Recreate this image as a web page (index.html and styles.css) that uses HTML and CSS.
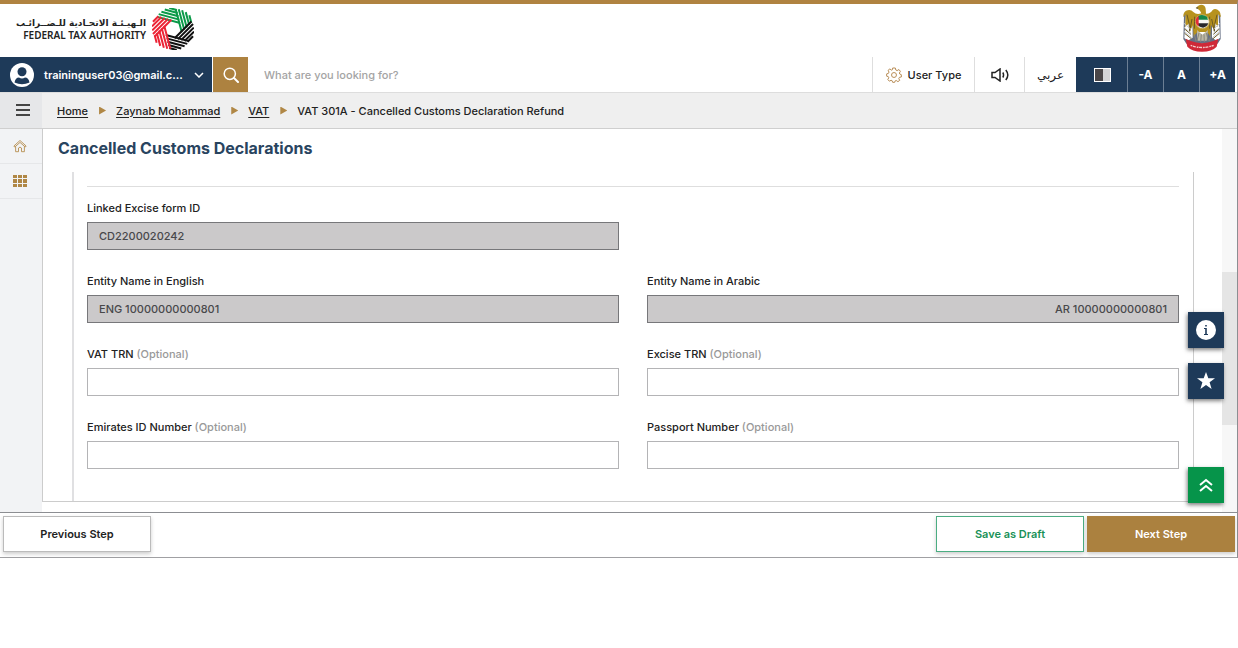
FILE: index.html
```html
<!DOCTYPE html>
<html lang="en">
<head>
<meta charset="utf-8">
<title>Cancelled Customs Declarations</title>
<link rel="stylesheet" href="styles.css">
</head>
<body>
<div class="app">
  <header class="brand">
    <div class="logo">
      <div class="logo-text">
        <span class="logo-ar" lang="ar" dir="rtl">الـهيـئـة الاتحـادية للـضــرائـب</span>
        <span class="logo-en">FEDERAL TAX AUTHORITY</span>
      </div>
      <svg class="logo-mark" viewBox="-63 -63 126 126" aria-hidden="true">
        <defs>
          <path id="blade" d="M-55-23H16M-53-32H11M-47-41H6M-39-50H1M-27-58H-4" fill="none" stroke-width="6"/>
        </defs>
        <g transform="rotate(15)">
          <g stroke="#0a9a48"><use href="#blade"/><use href="#blade" transform="rotate(60)"/></g>
          <g stroke="#111"><use href="#blade" transform="rotate(120)"/><use href="#blade" transform="rotate(180)"/></g>
          <g stroke="#ec2436"><use href="#blade" transform="rotate(240)"/><use href="#blade" transform="rotate(300)"/></g>
        </g>
      </svg>
    </div>
    <svg class="emblem" viewBox="0 0 114 144" aria-hidden="true">
      <path d="M3 34L9 27L4 102L14 110L29 101L28 45L42 48L44 102L71 102L72 48L87 44L87 101L101 110L111 101L106 28L112 34L113 105L104 119L10 119L1 105Z" fill="#667084"/>
      <path d="M55 28C52 20 49 18 44 14L38 12L46 5C56-1 67 4 68 14L69 29Q80 31 89 18Q98 11 109 22Q114 28 113 40L105 30L105 69L96 57L95 82L84 62L82 98L73 84L43 84L32 98L30 63L20 83L18 58L7 69L8 31L1 40Q0 25 9 20Q23 14 31 24Q41 34 55 28Z" fill="#b7921e"/>
      <path d="M12 32L18 57L20 82L27 45M102 32L96 57L94 82L86 45M5 75L24 91M5 88L25 104M109 75L91 91M109 88L90 104M35 38L34 74M80 38L80 74" fill="none" stroke="#6b5923" stroke-width="3"/>
      <path d="M3 58L24 76M3 70L24 88M4 82L26 101M111 58L91 76M111 70L91 88M110 82L88 101" fill="none" stroke="#c3c7ce" stroke-width="3"/>
      <circle cx="58" cy="53" r="21" fill="#f6f6f2" stroke="#c3a849" stroke-width="3"/>
      <path d="M45 37Q57 29 72 38L75 47H45Z" fill="#16874a"/>
      <path d="M45 58H76Q72 69 60 71Q49 70 45 64Z" fill="#28282a"/>
      <path d="M38 47Q40 39 47 36V68Q38 63 38 52Z" fill="#e32b38"/>
      <path d="M42 78L58 92L75 78L71 110H44Z" fill="#bdb9a6"/>
      <path d="M48 87L42 111M55 91L53 114M63 91L64 114M70 87L76 111M34 91L39 112M84 91L79 112" stroke="#8a877c" stroke-width="3"/>
      <path d="M8 104L23 111Q57 124 91 111L106 104L101 128Q87 143 57 143Q27 143 13 128Z" fill="#cf2937"/>
      <path d="M23 124Q57 137 92 124" fill="none" stroke="#f4d0cd" stroke-width="4" stroke-dasharray="5 2 9 3"/>
      <path d="M38 12L46 9L44 15Z" fill="#555"/>
    </svg>
  </header>

  <div class="toolbar">
    <button class="user" type="button">
      <svg class="avatar" viewBox="0 0 24 24" aria-hidden="true"><circle cx="12" cy="12" r="12" fill="#fff"/><circle cx="12" cy="8.800" r="4.500" fill="#1e3a59"/><path d="M4.500 19.500Q5.500 14.500 9 14.500Q12 16.500 15 14.500Q18.500 14.500 19.500 19.500Q12 23 4.500 19.500Z" fill="#1e3a59"/></svg>
      <span class="user-name">traininguser03@gmail.c...</span>
      <svg class="caret" viewBox="0 0 10 6" aria-hidden="true"><path d="M1 1L5 5L9 1" fill="none" stroke="#fff" stroke-width="1.500"/></svg>
    </button>
    <form class="search">
      <button class="search-btn" type="button" aria-label="Search"><svg viewBox="0 0 16 16" aria-hidden="true"><circle cx="6.800" cy="6.800" r="5.600" fill="none" stroke="#fff" stroke-width="1.500"/><path d="M11 11L15 15" stroke="#fff" stroke-width="2" stroke-linecap="round"/></svg></button>
      <input class="search-input" type="search" aria-label="Search" placeholder="What are you looking for?">
    </form>
    <button class="tool user-type" type="button">
      <svg class="gear" viewBox="0 0 24 24" fill="none" stroke="#b98e58" stroke-width="1.500" stroke-linejoin="round" aria-hidden="true"><circle cx="12" cy="12" r="3.700"/><path d="M10 1.500H14L14.700 4.500L16.700 5.400L19.400 3.800L21.600 6.500L20 9L20.700 10.600L23 11.500V15L20.200 15.500L19.200 17.500L20.600 20L17.900 22L15.300 20.200L13.800 20.800L13 23H10L9.200 20.600L7.600 19.900L5 21.300L2.700 18.700L4.200 16.200L3.500 14.500L1 13.800V10.300L3.700 9.500L4.500 7.600L3.100 5L5.800 2.900L8.200 4.700L9.500 4.200Z"/></svg>
      User Type
    </button>
    <button class="tool speaker" type="button" aria-label="Read aloud"><svg viewBox="0 0 18 14" fill="none" stroke="#222" stroke-width="1.500" aria-hidden="true"><path d="M1 4.500H4L9 1V13L4 9.500H1Z"/><path d="M11.800 4.500Q13.300 7 11.800 9.500M14.800 2Q18.800 7 14.800 12"/></svg></button>
    <button class="tool arabic" type="button" lang="ar">عربي</button>
    <button class="tool dark contrast" type="button" aria-label="Contrast"><svg viewBox="0 0 17 14" aria-hidden="true"><path fill="#fff" d="M0 0H17V14H0Z"/><path fill="#4a4648" d="M1 1H9V13H1Z"/><path fill="#d5d5d7" d="M9 1H16V13H9Z"/></svg></button>
    <button class="tool dark size" type="button">-A</button>
    <button class="tool dark size" type="button">A</button>
    <button class="tool dark size" type="button">+A</button>
  </div>

  <div class="crumb-row">
    <button class="menu" type="button" aria-label="Menu"><svg viewBox="0 0 14 12" aria-hidden="true"><path d="M0 1H14M0 6H14M0 11H14" stroke="#444" stroke-width="2"/></svg></button>
    <nav class="crumbs" aria-label="Breadcrumb">
      <a href="#">Home</a><i class="arrow"></i><a href="#">Zaynab Mohammad</a><i class="arrow"></i><a href="#">VAT</a><i class="arrow"></i><span>VAT 301A - Cancelled Customs Declaration Refund</span>
    </nav>
  </div>

  <div class="body">
    <nav class="side" aria-label="Main">
      <a class="side-item" href="#" aria-label="Home"><svg viewBox="0 0 16 15" fill="none" stroke="#b58c4b" aria-hidden="true"><path d="M1 7.500L8 1.200L15 7.500L14 8.700L8 3.400L2 8.700Z"/><path d="M3 8V14H6.300V9.800Q8 7.800 9.700 9.800V14H13V8"/></svg></a>
      <a class="side-item" href="#" aria-label="Services"><svg viewBox="0 0 14 14" fill="#b08745" aria-hidden="true"><path d="M0 1H4V4H0ZM5 1H9V4H5ZM10 1H14V4H10ZM0 5H4V9H0ZM5 5H9V9H5ZM10 5H14V9H10ZM0 10H4V13H0ZM5 10H9V13H5ZM10 10H14V13H10Z"/></svg></a>
    </nav>
    <main class="content">
      <div class="panel">
        <h1>Cancelled Customs Declarations</h1>
        <form class="declaration">
          <div class="fields">
            <div class="field half"><label for="form-id">Linked Excise form ID</label><input id="form-id" value="CD2200020242" readonly></div>
            <div class="field"><label for="name-en">Entity Name in English</label><input id="name-en" value="ENG 10000000000801" readonly></div>
            <div class="field"><label for="name-ar">Entity Name in Arabic</label><input id="name-ar" class="end" value="AR 10000000000801" readonly></div>
            <div class="field"><label for="vat">VAT TRN <span>(Optional)</span></label><input id="vat"></div>
            <div class="field"><label for="excise">Excise TRN <span>(Optional)</span></label><input id="excise"></div>
            <div class="field"><label for="eid">Emirates ID Number <span>(Optional)</span></label><input id="eid"></div>
            <div class="field"><label for="passport">Passport Number <span>(Optional)</span></label><input id="passport"></div>
          </div>
        </form>
      </div>
    </main>
    <div class="scroll"><div class="thumb"></div></div>
    <div class="float">
      <button type="button" aria-label="Information"><svg viewBox="0 0 20 20" aria-hidden="true"><circle cx="10" cy="10" r="10" fill="#fff"/><path d="M8 8H10.800V14H12V15H8V14H9.200V9H8ZM9.200 5H10.800V6.500H9.200Z" fill="#1e3a59"/></svg></button>
      <button type="button" aria-label="Favourites"><svg viewBox="0 0 20 20" aria-hidden="true"><path d="M10 1L12.300 7.300H19L13.600 11.300L15.600 18L10 14L4.400 18L6.400 11.300L1 7.300H7.700Z" fill="#fff"/></svg></button>
      <button class="top" type="button" aria-label="Back to top"><svg viewBox="0 0 20 20" aria-hidden="true"><path d="M4 10L10 5L16 10M4 16L10 11L16 16" fill="none" stroke="#fff" stroke-width="2"/></svg></button>
    </div>
  </div>

  <footer class="actions">
    <button class="btn" type="button">Previous Step</button>
    <button class="btn draft" type="button">Save as Draft</button>
    <button class="btn next" type="button">Next Step</button>
  </footer>
</div>
</body>
</html>
```
FILE: styles.css
```css
* { box-sizing: border-box; }
body { margin: 0; background: #fff; color: #222; font: 500 11px/16px Inter, "Open Sans", sans-serif; }
button, input { font: inherit; color: inherit; border-radius: 0; margin: 0; }
button { border: 0; padding: 0; display: flex; align-items: center; justify-content: center; }
svg { display: block; flex: none; }

.app { border-top: 4px solid #b08341; border-right: 1px solid #8c8e92; }

.brand { display: flex; justify-content: space-between; height: 53px; padding: 0 16px; }
.logo { display: flex; align-items: center; gap: 6px; padding-bottom: 4px; }
.logo-text { display: flex; flex-direction: column; align-items: flex-end; color: #222; }
.logo-ar { font: bold 9px/12px "DejaVu Sans", sans-serif; white-space: nowrap; }
.logo-en { font: 600 10px/12px "Noto Sans", sans-serif; white-space: nowrap; }
.logo-mark { width: 42px; height: 42px; }
.emblem { width: 38px; height: 48px; }

.toolbar { display: flex; height: 36px; padding-right: 2px; border-bottom: 1px solid #ddd; }
.user { width: 212px; padding: 0 8px 0 10px; gap: 10px; justify-content: flex-start; background: #1e3a59; color: #fff; font-weight: 600; }
.avatar { width: 24px; height: 24px; }
.user-name { flex: 1; text-align: left; white-space: nowrap; }
.caret { width: 10px; height: 6px; }
.search { display: flex; flex: 1; margin-left: 1px; }
.search-btn { width: 35px; background: #ad8240; }
.search-btn svg { width: 16px; height: 16px; }
.search-input { flex: 1; min-width: 0; border: 0; padding: 0 16px; background: #fff; }
.search-input::placeholder { color: #a4a4a4; opacity: 1; }
.tool { background: #fff; border-left: 1px solid #dedede; }
.user-type { width: 102px; gap: 6px; }
.gear { width: 16px; height: 16px; }
.speaker { width: 50px; }
.speaker svg { width: 18px; height: 14px; }
.arabic { width: 52px; font: 12px/16px "DejaVu Sans", sans-serif; }
.dark { background: #1e3a59; color: #fff; border-left-color: #6c7f94; font-weight: 700; font-size: 12px; }
.contrast { width: 51px; border-left-color: #1e3a59; }
.contrast svg { width: 17px; height: 14px; }
.size { width: 36px; }

.crumb-row { display: flex; height: 36px; background: #efefef; border-bottom: 1px solid #cfcfcf; }
.menu { width: 42px; padding: 0 0 2px 4px; background: #e6e7e9; }
.menu svg { width: 14px; height: 12px; }
.crumbs { display: flex; align-items: center; padding-left: 15px; }
.crumbs a { color: #222; text-underline-offset: 2px; }
.arrow { width: 7px; height: 8px; margin: 0 10px 0 11px; background: #b08745; clip-path: polygon(0 0, 100% 50%, 0 100%); }

.body { position: relative; display: flex; }
.side { width: 42px; background: #f2f3f5; }
.side-item { display: flex; align-items: center; justify-content: center; height: 35px; padding: 0 3px 1px 0; border-bottom: 1px solid #e6e7e9; }
.side-item svg { width: 14px; height: 14px; }
.content { flex: 1; padding-bottom: 10px; }
.panel { padding: 10px 28px 0 29px; border-left: 1px solid #ccc; border-bottom: 1px solid #ccc; }
h1 { margin: 0 0 15px -14px; color: #29445f; font-size: 16px; line-height: 18px; font-weight: 700; }
.declaration { padding: 14px 14px 32px 13px; border-left: 2px solid #e0e0e2; border-right: 1px solid #ccc; }
.fields { display: grid; grid-template-columns: 1fr 1fr; gap: 23px 28px; padding-top: 13px; border-top: 1px solid #dedede; }
.half { grid-column: 1 / -1; width: calc(50% - 14px); }
.field { display: flex; flex-direction: column; gap: 5px; }
.field label { line-height: 17px; }
.field label span { color: #999; }
.field input { width: 100%; height: 28px; padding: 0 11px; border: 1px solid #b4b4b6; background: #fff; }
.field input[readonly] { background: #cbc9ca; border-color: #77777a; color: #48484a; }
.field .end { text-align: right; }
.scroll { width: 15px; padding-top: 143px; background: #f7f7f7; }
.thumb { height: 153px; background: #e5e5e5; }
.float { position: absolute; top: 183px; right: 13px; bottom: 9px; display: flex; flex-direction: column; gap: 15px; }
.float button { width: 36px; height: 36px; background: #1e3a59; box-shadow: -1px 2px 4px rgba(0, 0, 0, .5); }
.float svg { width: 20px; height: 20px; }
.float .top { margin-top: auto; background: #06944a; }

.actions { display: flex; gap: 3px; padding: 3px 2px 5px 3px; border-top: 1px solid #8c8e92; border-bottom: 1px solid #a0a0a3; }
.btn { width: 148px; height: 36px; background: #fff; border: 1px solid #bbb; box-shadow: 0 2px 4px rgba(0, 0, 0, .2); font-weight: 600; }
.draft { margin-left: auto; color: #199157; border-color: #4bad82; }
.next { background: #ab813f; border-color: #ab813f; color: #fff; }
```
